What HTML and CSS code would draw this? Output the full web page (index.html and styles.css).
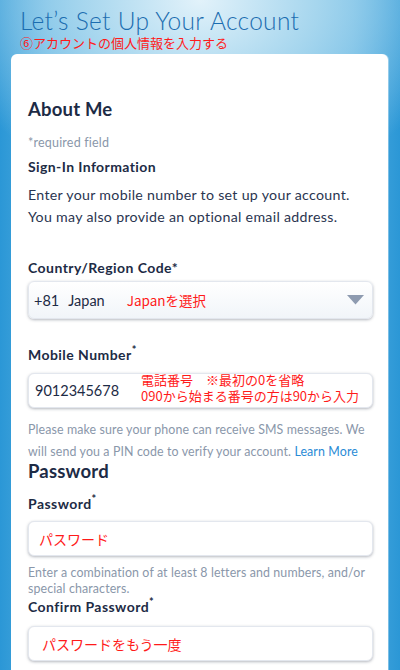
FILE: index.html
```html
<!DOCTYPE html>
<html lang="ja">
<head>
<meta charset="utf-8">
<title>Let's Set Up Your Account</title>
<link rel="stylesheet" href="styles.css">
</head>
<body>
<header class="top">
  <h1 class="title">Let’s Set Up Your Account</h1>
  <p class="note-top">⑥アカウントの個人情報を入力する</p>
</header>
<main class="card">
  <h2 class="section">About Me</h2>
  <p class="required">*required field</p>
  <h3 class="sub">Sign-In Information</h3>
  <p class="para">Enter your mobile number to set up your account. You may also provide an optional email address.</p>

  <label class="label label-country">Country/Region Code*</label>
  <div class="select">
    <span class="sel-code">+81</span><span class="sel-name">Japan</span>
    <span class="red sel-note">Japanを選択</span>
    <svg class="arrow" width="17" height="10" viewBox="0 0 17 10"><path d="M0 0H17L8.5 9.5Z" fill="#8e9bb0"/></svg>
  </div>

  <label class="label label-mobile">Mobile Number<sup>*</sup></label>
  <div class="input input-mobile">
    <span class="val">9012345678</span>
    <span class="red mob-note">電話番号　※最初の0を省略<br>090から始まる番号の方は90から入力</span>
  </div>
  <p class="help help-sms">Please make sure your phone can receive SMS messages. We will send you a PIN code to verify your account. <a class="link">Learn More</a></p>

  <h2 class="section section-pw">Password</h2>
  <label class="label label-pw">Password<sup>*</sup></label>
  <div class="input input-pw"><span class="red pw-note">パスワード</span></div>
  <p class="help help-pw">Enter a combination of at least 8 letters and numbers, and/or special characters.</p>
  <label class="label label-confirm">Confirm Password<sup>*</sup></label>
  <div class="input input-confirm"><span class="red confirm-note">パスワードをもう一度</span></div>
</main>
</body>
</html>
```
FILE: styles.css
```css
* { box-sizing: border-box; }
html, body { margin: 0; padding: 0; }
body {
  width: 400px;
  height: 670px;
  overflow: hidden;
  font-family: Lato, "Noto Sans", "Noto Sans CJK JP", sans-serif;
  color: #1d2b45;
  background:
    radial-gradient(ellipse 260px 200px at 50% 0%, #e2f2fa 0%, #a6d6ee 45%, rgba(80,170,225,0) 100%),
    linear-gradient(to right, #2b97d6 0%, #52ade0 12%, #6bbbe5 50%, #52ade0 88%, #2b97d6 100%);
  background-color: #2b97d6;
}
.top { padding: 8px 0 0 20px; height: 54px; }
.title {
  margin: 0;
  font-family: Lato, sans-serif;
  font-weight: 300;
  font-size: 24.5px;
  line-height: 26px;
  color: #1b6db0;
  letter-spacing: 0.3px;
}
.note-top {
  margin: 0;
  font-family: "Noto Sans CJK JP", sans-serif;
  font-size: 13px;
  line-height: 17px;
  color: #ff1a1a;
}
.card {
  margin: 0 12px 0 11px;
  background: #fff;
  border-radius: 6px 6px 0 0;
  padding: 44px 15px 20px 17px;
  height: 640px;
  box-shadow: 1px 0 0 rgba(255,255,255,0.35);
}
.section {
  margin: 0;
  font-size: 18.5px;
  line-height: 22px;
  font-weight: 700;
  color: #1d2b45;
  letter-spacing: 0.2px;
}
.required {
  margin: 14px 0 0;
  font-size: 12.5px;
  line-height: 18px;
  color: #8a97aa;
  letter-spacing: 0.2px;
}
.sub {
  margin: 5px 0 0;
  font-size: 14px;
  line-height: 20px;
  font-weight: 700;
  letter-spacing: 0.4px;
}
.para {
  margin: 7px 0 0;
  font-size: 14.2px;
  line-height: 22px;
  color: #2a3550;
  letter-spacing: 0.3px;
}
.label {
  display: block;
  font-size: 14px;
  line-height: 20px;
  font-weight: 700;
  color: #1d2b45;
  letter-spacing: 0.45px;
}
.label sup { font-size: 11px; line-height: 0; vertical-align: 6px; }
.label-country { margin-top: 30px; }
.label-mobile { margin-top: 26px; }
.label-pw { margin-top: 12px; }
.label-confirm { margin-top: 0; }
.select, .input {
  display: flex;
  align-items: center;
  width: 345px;
  border: 1px solid #e3e7ee;
  border-radius: 6px;
  box-shadow: 0 1px 3px rgba(40,50,70,0.35);
  background: #fff;
}
.select {
  margin-top: 3px;
  height: 38px;
  padding: 0 8px 0 5px;
  background: linear-gradient(#ffffff, #f1f5f9);
  font-size: 14.5px;
  color: #1d2b45;
}
.sel-code { margin-right: 9px; }
.sel-name { margin-right: 22px; }
.red {
  font-family: "Noto Sans CJK JP", sans-serif;
  color: #ff1a1a;
  font-size: 13.5px;
}
.sel-note { flex: 1; }
.arrow { display: block; }
.input-mobile {
  margin-top: 8px;
  height: 35px;
  padding-left: 6px;
  align-items: flex-start;
}
.val { font-size: 14.5px; line-height: 34px; width: 106px; flex: none; }
.mob-note { font-size: 13px; line-height: 16px; margin-top: -2px; }
.help {
  margin: 0;
  color: #8a97aa;
  font-size: 12.4px;
  letter-spacing: 0.12px;
}
.help-sms { margin-top: 11px; line-height: 22px; }
.link { color: #2a8bd6; }
.section-pw { margin-top: -3px; }
.input-pw { margin-top: 7px; height: 35px; padding-left: 10px; }
.help-pw { margin-top: 9px; line-height: 16px; }
.input-confirm { margin-top: 9px; height: 35px; padding-left: 13px; }
.pw-note, .confirm-note { font-size: 14px; }
```
